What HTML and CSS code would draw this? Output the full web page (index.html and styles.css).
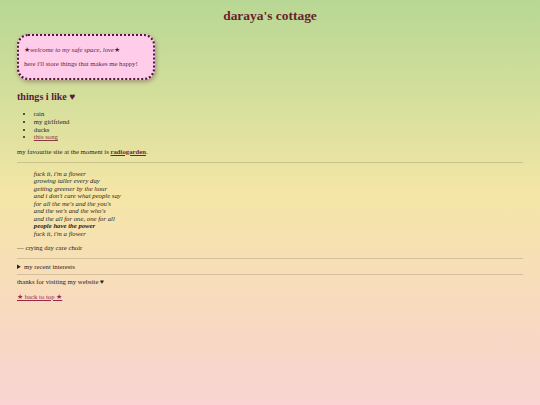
FILE: index.html
```html
<!DOCTYPE html>
<html>
<head>
<meta charset="utf-8">
<title>daraya's cottage</title>
<link rel="stylesheet" href="styles.css">
</head>
<body>
<h1 class="title">daraya's cottage</h1>
<div class="welcome">
  <p class="welcome-line"><span class="star">★</span>welcome to my safe space, love<span class="star">★</span></p>
  <p class="welcome-text">here i'll store things that makes me happy!</p>
</div>
<h2 class="section">things i like <span class="heart">♥</span></h2>
<ul class="likes">
  <li>rain</li>
  <li>my girlfriend</li>
  <li>ducks</li>
  <li><a class="link" href="#">this song</a></li>
</ul>
<p class="text">my favourite site at the moment is <a class="link strong" href="#">radiogarden</a>.</p>
<hr class="rule">
<blockquote class="poem">
  <p class="poem-lines">fuck it, i'm a flower<br>growing taller every day<br>getting greener by the hour<br>and i don't care what people say<br>for all the me's and the you's<br>and the we's and the who's<br>and the all for one, one for all<br><b>people have the power</b><br>fuck it, i'm a flower</p>
</blockquote>
<p class="text">— crying day care choir</p>
<hr class="rule">
<details class="interests">
  <summary class="summary">my recent interests</summary>
</details>
<hr class="rule">
<p class="text tight">thanks for visiting my website ♥</p>
<p class="text"><a class="link top" href="#">★ back to top ★</a></p>
</body>
</html>
```
FILE: styles.css
```css
html {
  min-height: 100%;
  background: linear-gradient(to bottom, #b8d794 0%, #d6df9c 25%, #f4e6a6 48%, #f8dcbc 72%, #f9d3d2 100%);
}
body {
  margin: 0;
  padding: 0 17px 10px;
  min-height: 395px;
  font-family: "Liberation Serif", "Times New Roman", serif;
  font-size: 6.72px;
  color: #2a2222;
}
.title {
  margin: 8px 0 10.5px;
  text-align: center;
  font-size: 13.44px;
  line-height: 15.5px;
  color: #6a1e2c;
}
.welcome {
  box-sizing: border-box;
  width: 138px;
  padding: 3.4px 5px;
  background: #ffcdea;
  border: 2px dotted #4e1a3c;
  border-radius: 11px;
  box-shadow: 1px 2px 4px rgba(80, 20, 60, 0.35);
  color: #5a2446;
}
.welcome p {
  margin: 6.7px 0;
  line-height: 7.7px;
}
.welcome-line {
  font-style: italic;
}
.star {
  font-style: normal;
  color: #5a1a40;
}
.section {
  margin: 11px 0 7.4px;
  font-size: 10.08px;
  line-height: 11.6px;
  color: #5a1a3e;
}
.likes {
  margin: 0;
  padding-left: 16.8px;
  line-height: 7.7px;
}
.text {
  margin: 6.7px 0;
  line-height: 7.7px;
}
.tight {
  margin-top: 3.4px;
}
.link {
  color: #8b3a3e;
}
.strong {
  font-weight: bold;
  color: #7a2030;
}
.top {
  color: #9a2848;
}
.rule {
  border: 0;
  border-top: 1px solid rgba(90, 80, 60, 0.22);
  margin: 6.7px 0 3.4px;
  height: 0;
}
.poem {
  margin: 6.7px 0 0 16.8px;
}
.poem-lines {
  margin: 0;
  font-style: italic;
  line-height: 7.5px;
  color: #2a2222;
}
.interests {
  margin: 0;
}
.summary {
  line-height: 7.7px;
  cursor: pointer;
}
.interests + .rule {
  margin-top: 3.4px;
}
```
